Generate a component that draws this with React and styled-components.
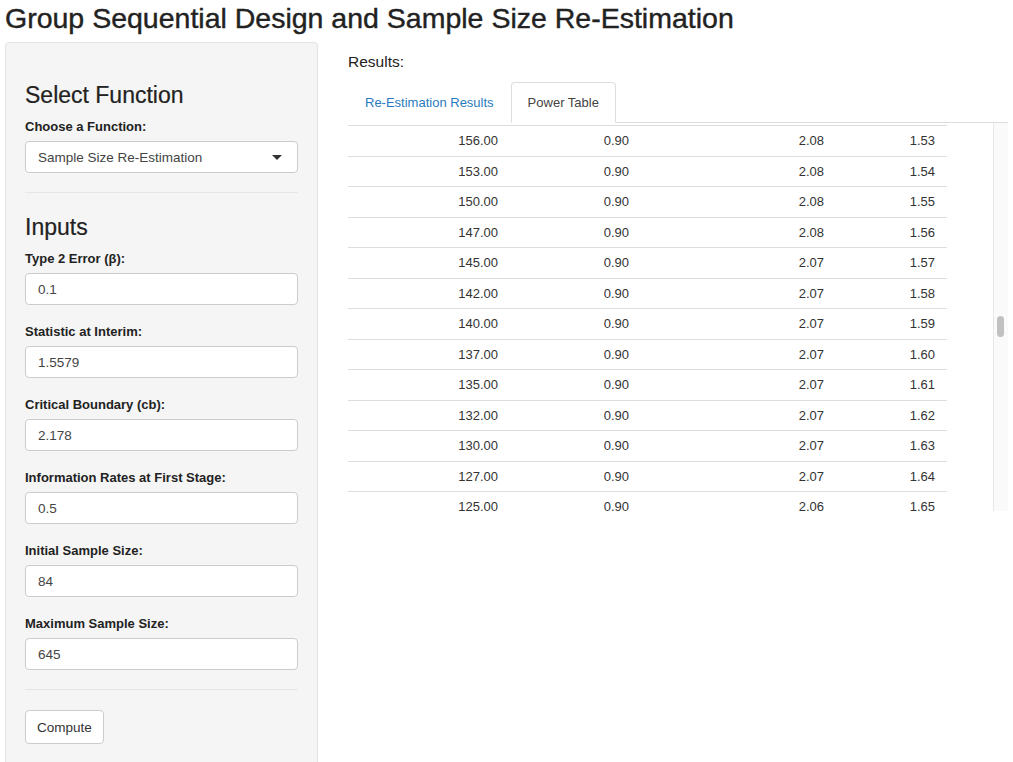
import React from 'react';
import styled, { createGlobalStyle } from 'styled-components';

const Global = createGlobalStyle`
  body { margin: 0; font-family: "Liberation Sans", Arial, sans-serif; color: #333; background: #fff; }
`;

const Page = styled.div`
  padding: 0 5px;
  width: 1013px;
  height: 762px;
  box-sizing: border-box;
  overflow: hidden;
`;

const Title = styled.h1`
  margin: 0;
  padding: 1px 0 0 0;
  font-size: 28.5px;
  font-weight: 400;
  -webkit-text-stroke: 0.4px #222;
  color: #222;
  height: 41px;
  line-height: 34px;
  white-space: nowrap;
`;

const Layout = styled.div`
  display: flex;
  gap: 30px;
`;

const Sidebar = styled.div`
  width: 314px;
  box-sizing: border-box;
  background: #f5f5f5;
  border: 1px solid #e3e3e3;
  border-radius: 4px;
  padding: 38px 19px 30px;
  height: 740px;
`;

const H3 = styled.h3`
  margin: 0 0 10px;
  font-size: 23px;
  font-weight: 400;
  -webkit-text-stroke: 0.2px #222;
  color: #222;
  line-height: 28px;
`;

const Label = styled.div`
  font-size: 13px;
  font-weight: 700;
  color: #222;
  margin-bottom: 7px;
`;

const Field = styled.div`
  height: 32px;
  box-sizing: border-box;
  background: #fff;
  border: 1px solid #ccc;
  border-radius: 4px;
  padding: 0 12px;
  display: flex;
  align-items: center;
  justify-content: space-between;
  font-size: 13.5px;
  color: #444;
  margin-bottom: 19px;
`;

const Caret = styled.span`
  width: 0; height: 0;
  border-left: 5px solid transparent;
  border-right: 5px solid transparent;
  border-top: 5px solid #333;
  margin-right: 3px;
`;

const Rule = styled.hr`
  border: 0;
  border-top: 1px solid #e6e6e6;
  margin: 0 0 20px;
`;

const Button = styled.button`
  font-family: inherit;
  font-size: 13.5px;
  color: #333;
  background: #fff;
  border: 1px solid #ccc;
  border-radius: 4px;
  height: 34px;
  padding: 0 11px;
`;

const Main = styled.div`
  flex: 1;
  padding-top: 11px;
`;

const ResultsLabel = styled.div`
  font-size: 15.5px;
  color: #222;
  margin-bottom: 11px;
`;

const Tabs = styled.div`
  display: flex;
  height: 41px;
  border-bottom: 1px solid #ddd;
  box-sizing: border-box;
  width: 660px;
  align-items: flex-end;
`;

const Tab = styled.div`
  height: 41px;
  box-sizing: border-box;
  padding: 0 16px;
  display: flex;
  align-items: center;
  font-size: 13px;
  color: ${p => (p.$active ? '#444' : '#2a7bbd')};
  background: #fff;
  border: 1px solid ${p => (p.$active ? '#ddd' : 'transparent')};
  border-bottom-color: ${p => (p.$active ? '#fff' : 'transparent')};
  border-radius: 4px 4px 0 0;
  margin-bottom: -1px;
`;

const Scroller = styled.div`
  position: relative;
  width: 660px;
  height: 388px;
  overflow: hidden;
  padding-top: 2px;
  box-sizing: border-box;
`;

const Track = styled.div`
  position: absolute;
  top: 0;
  right: 0;
  width: 15px;
  height: 100%;
  background: #fafafa;
  border-left: 1px solid #e8e8e8;
  box-sizing: border-box;
`;

const Thumb = styled.div`
  position: absolute;
  top: 193px;
  left: 3px;
  width: 7px;
  height: 21px;
  border-radius: 4px;
  background: #c1c1c1;
`;

const Table = styled.div`
  width: 599px;
  border-top: 1px solid #ddd;
`;

const Row = styled.div`
  display: grid;
  grid-template-columns: 150px 131px 195px 111px;
  height: 30.5px;
  box-sizing: border-box;
  border-bottom: 1px solid #ddd;
  align-items: center;
  font-size: 13px;
  color: #333;
`;

const Cell = styled.div`
  text-align: right;
`;

const data = [
  ['156.00', '2.08', '1.53'],
  ['153.00', '2.08', '1.54'],
  ['150.00', '2.08', '1.55'],
  ['147.00', '2.08', '1.56'],
  ['145.00', '2.07', '1.57'],
  ['142.00', '2.07', '1.58'],
  ['140.00', '2.07', '1.59'],
  ['137.00', '2.07', '1.60'],
  ['135.00', '2.07', '1.61'],
  ['132.00', '2.07', '1.62'],
  ['130.00', '2.07', '1.63'],
  ['127.00', '2.07', '1.64'],
  ['125.00', '2.06', '1.65'],
];

const inputs = [
  ['Type 2 Error (β):', '0.1'],
  ['Statistic at Interim:', '1.5579'],
  ['Critical Boundary (cb):', '2.178'],
  ['Information Rates at First Stage:', '0.5'],
  ['Initial Sample Size:', '84'],
  ['Maximum Sample Size:', '645'],
];

export default function App() {
  return (
    <Page>
      <Global />
      <Title>Group Sequential Design and Sample Size Re-Estimation</Title>
      <Layout>
        <Sidebar>
          <H3>Select Function</H3>
          <Label>Choose a Function:</Label>
          <Field>
            Sample Size Re-Estimation
            <Caret />
          </Field>
          <Rule />
          <H3>Inputs</H3>
          {inputs.map(([l, v]) => (
            <div key={l}>
              <Label>{l}</Label>
              <Field>{v}</Field>
            </div>
          ))}
          <Rule />
          <Button>Compute</Button>
        </Sidebar>
        <Main>
          <ResultsLabel>Results:</ResultsLabel>
          <Tabs>
            <Tab>Re-Estimation Results</Tab>
            <Tab $active>Power Table</Tab>
          </Tabs>
          <Scroller>
            <Table>
              {data.map(([n, c, z]) => (
                <Row key={z}>
                  <Cell>{n}</Cell>
                  <Cell>0.90</Cell>
                  <Cell>{c}</Cell>
                  <Cell>{z}</Cell>
                </Row>
              ))}
            </Table>
            <Track>
              <Thumb />
            </Track>
          </Scroller>
        </Main>
      </Layout>
    </Page>
  );
}
